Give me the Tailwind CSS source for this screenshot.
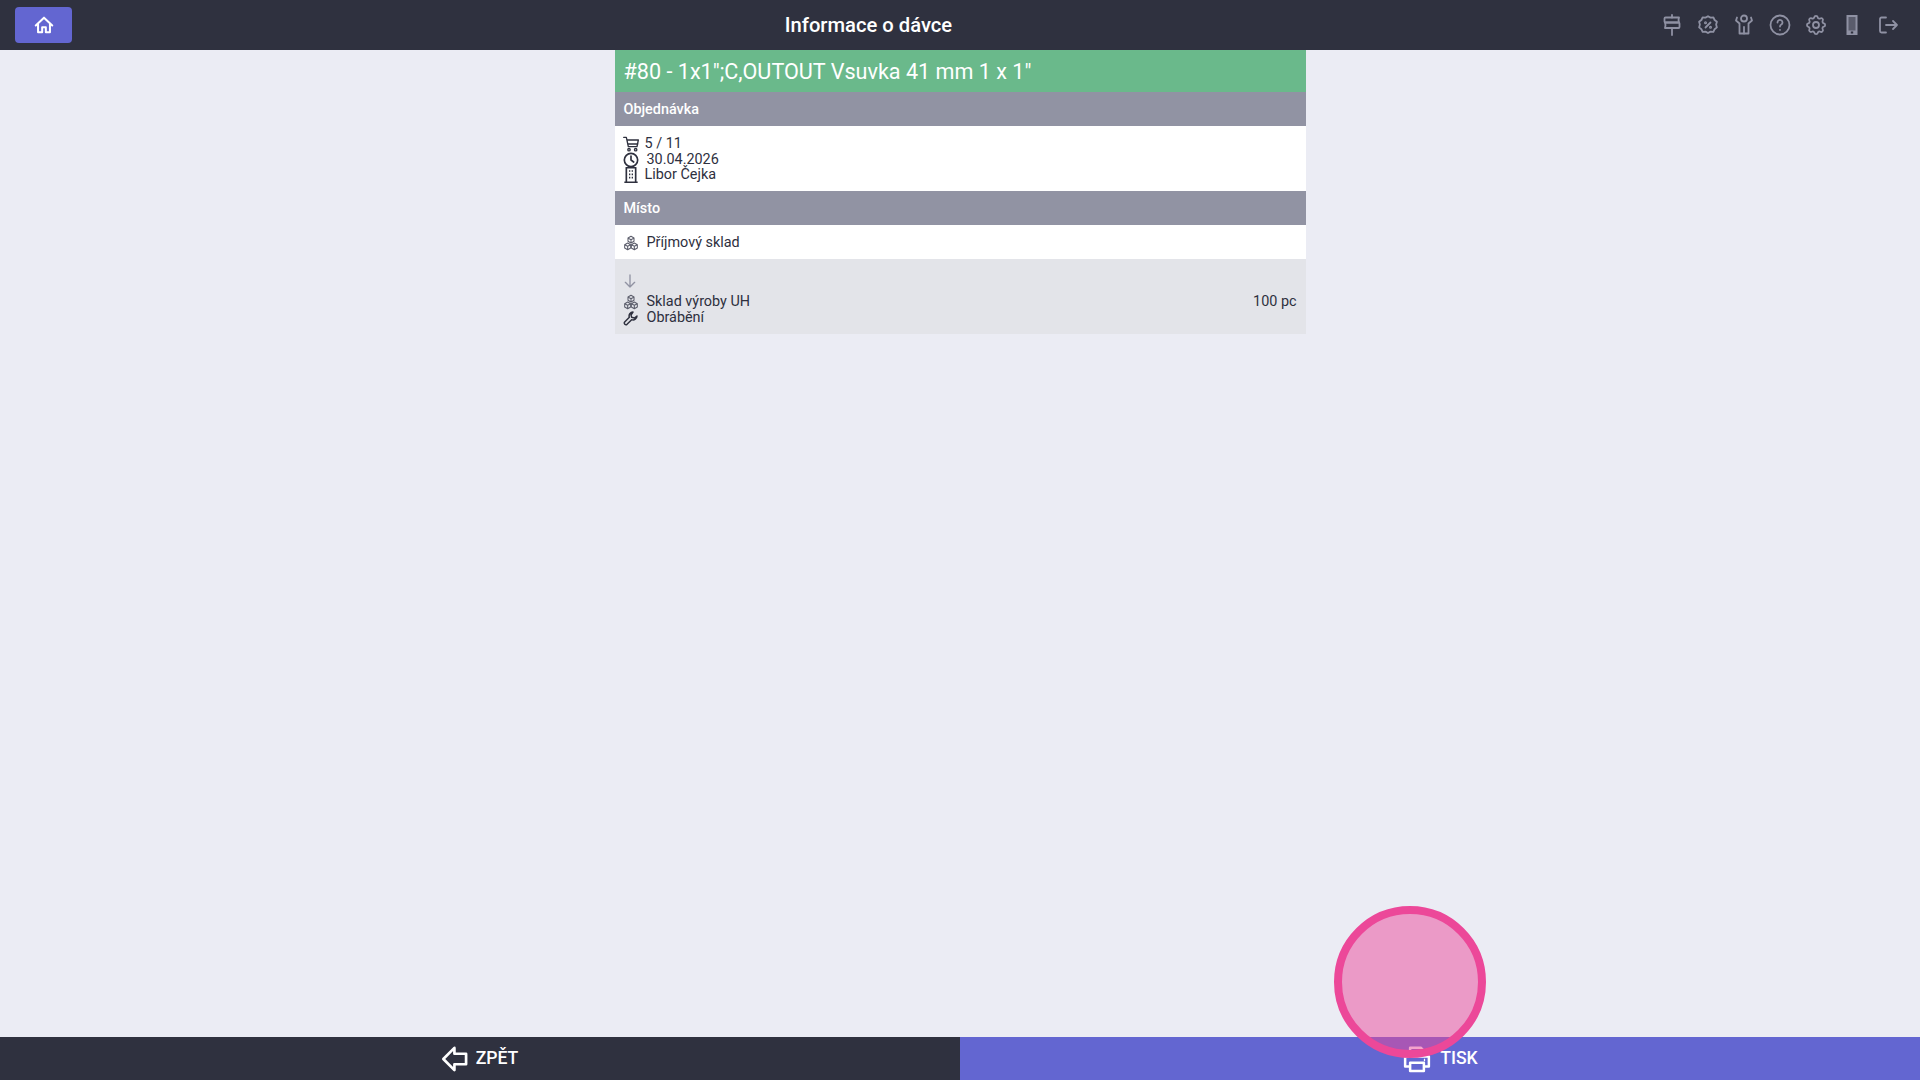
<!DOCTYPE html>
<html lang="cs">
<head>
<meta charset="utf-8">
<title>Informace o dávce</title>
<script src="https://cdn.jsdelivr.net/npm/@tailwindcss/browser@4"></script>
</head>
<body class="font-['Roboto',sans-serif]">
<div class="relative flex flex-col w-[1920px] h-[1080px] overflow-hidden bg-[#ebecf4] text-[#2e303e]">
  <header class="grid grid-cols-[1fr_auto_1fr] items-center h-[50px] shrink-0 bg-[#2f313f] pl-[15px] pr-[20px]">
    <div class="flex">
      <button class="flex items-center justify-center w-[57px] h-[36px] rounded-[4px] bg-[#6366d1] text-white">
        <svg class="w-[22px] h-[22px]" viewBox="0 0 24 24" fill="none" stroke="currentColor" stroke-width="2.2" stroke-linecap="round" stroke-linejoin="round"><path d="M3 12.500 12 4l9 8.500"/><path d="M5.500 11v9h4.500v-5.500h4V20h4.500v-9"/></svg>
      </button>
    </div>
    <h1 class="text-[20.2px] leading-[24px] font-medium text-white pr-[178px]">Informace o dávce</h1>
    <div class="flex justify-end items-center gap-[12px] text-[#8f91a3]">
      <svg class="w-[24px] h-[24px]" viewBox="0 0 24 24" fill="none" stroke="currentColor" stroke-width="1.800" stroke-linecap="round" stroke-linejoin="round"><path d="M12 2v2.500M12 15v7"/><path d="M5.500 4.500h13.500l-.5 2.500.5 2.500H5.500a1 1 0 0 1-1-1v-3a1 1 0 0 1 1-1z"/><path d="M5 9.500h13.500a1 1 0 0 1 1 1v3.500a1 1 0 0 1-1 1H5l.5-2.800z"/></svg>
      <svg class="w-[24px] h-[24px]" viewBox="0 0 24 24" fill="none" stroke="currentColor" stroke-width="1.800" stroke-linecap="round" stroke-linejoin="round"><path d="M12 3.200l2.500 1.400 2.900-.2 1.200 2.600 2.300 1.800-.8 2.800.8 2.800-2.300 1.800-1.200 2.600-2.900-.2-2.500 1.400-2.500-1.400-2.900.2-1.200-2.600-2.300-1.800.8-2.800-.8-2.800 2.300-1.800 1.200-2.600 2.900.2z"/><path d="M9.500 14.500l5-5"/><circle cx="9.500" cy="9.800" r=".6"/><circle cx="14.500" cy="14.200" r=".6"/></svg>
      <svg class="w-[24px] h-[24px]" viewBox="0 0 24 24" fill="none" stroke="currentColor" stroke-width="1.800" stroke-linecap="round" stroke-linejoin="round"><circle cx="12" cy="5.500" r="3"/><path d="M5 4.500 4 7.500l3.500 3v10h9v-10l3.500-3-1-3"/><path d="M12 14v6.500"/></svg>
      <svg class="w-[24px] h-[24px]" viewBox="0 0 24 24" fill="none" stroke="currentColor" stroke-width="1.800" stroke-linecap="round" stroke-linejoin="round"><circle cx="12" cy="12" r="9.500"/><path d="M9.500 9.500a2.500 2.500 0 1 1 3.800 2.100c-.8.500-1.300 1-1.300 2"/><path d="M12 16.800v.1"/></svg>
      <svg class="w-[24px] h-[24px]" viewBox="0 0 24 24" fill="none" stroke="currentColor" stroke-width="1.800" stroke-linecap="round" stroke-linejoin="round"><path d="M10.300 4.300c.4-1.800 3-1.800 3.400 0a1.700 1.700 0 0 0 2.600 1.100c1.500-.9 3.300.8 2.400 2.400a1.700 1.700 0 0 0 1.100 2.500c1.800.4 1.800 3 0 3.400a1.700 1.700 0 0 0-1.100 2.600c.9 1.500-.8 3.300-2.400 2.400a1.700 1.700 0 0 0-2.500 1.100c-.4 1.800-3 1.800-3.400 0a1.700 1.700 0 0 0-2.600-1.100c-1.500.9-3.300-.8-2.400-2.400a1.700 1.700 0 0 0-1.100-2.500c-1.800-.4-1.800-3 0-3.400a1.700 1.700 0 0 0 1.100-2.600c-.9-1.500.8-3.300 2.400-2.400a1.700 1.700 0 0 0 2.500-1.100z"/><circle cx="12" cy="12" r="3"/></svg>
      <svg class="w-[24px] h-[24px]" viewBox="0 0 24 24"><rect x="6.500" y="2" width="11" height="20" fill="currentColor"/><rect x="8.500" y="4" width="7" height="13.500" fill="#2f313f" fill-opacity=".55"/><rect x="10.800" y="18.500" width="2.400" height="2" fill="#2f313f"/></svg>
      <svg class="w-[24px] h-[24px]" viewBox="0 0 24 24" fill="none" stroke="currentColor" stroke-width="1.800" stroke-linecap="round" stroke-linejoin="round"><path d="M10 4.500H5.500a1.500 1.500 0 0 0-1.500 1.500v12a1.500 1.500 0 0 0 1.500 1.500H10"/><path d="M10 12h11M17 8l4 4-4 4"/></svg>
    </div>
  </header>

  <main class="flex-1 flex justify-center">
    <div class="w-[691px]">
      <div class="h-[42px] px-[9px] pt-[1px] flex items-center bg-[#6ab98b] text-white text-[21.6px] leading-[26px]">#80 - 1x1";C,OUTOUT Vsuvka 41 mm 1 x 1"</div>
      <div class="h-[34px] px-[9px] pt-[1px] flex items-center bg-[#9193a3] text-white text-[14.4px] font-medium">Objednávka</div>
      <div class="h-[65px] px-[9px] pt-[10px] bg-white text-[14.4px] leading-[15.500px]">
        <div class="flex items-center gap-[6px]">
          <svg class="w-[16px] h-[16px] -ml-[1px]" viewBox="0 0 24 24" fill="none" stroke="currentColor" stroke-width="2" stroke-linecap="round" stroke-linejoin="round"><path d="M1 2h4l3 14h13l2-10H6"/><path d="M8 12h14"/><circle cx="9" cy="20.500" r="1.800"/><circle cx="19" cy="20.500" r="1.800"/></svg>
          <span>5 / 11</span>
        </div>
        <div class="flex items-center gap-[8px]">
          <svg class="w-[16px] h-[16px] -ml-[1px]" viewBox="0 0 24 24" fill="none" stroke="currentColor" stroke-width="2.500" stroke-linecap="round" stroke-linejoin="round"><circle cx="12" cy="12" r="10"/><path d="M12 6v6l4 3"/></svg>
          <span>30.04.2026</span>
        </div>
        <div class="flex items-center gap-[6px] -mt-[1px]">
          <svg class="w-[16px] h-[16px] -ml-[1px]" viewBox="0 0 24 24" fill="none" stroke="currentColor" stroke-width="2.500" stroke-linejoin="round"><path d="M5 23V1h14v22M2 23h20M9 6h2M13 6h2M9 11h2M13 11h2M9 16h2M13 16h2"/></svg>
          <span>Libor Čejka</span>
        </div>
      </div>
      <div class="h-[34px] px-[9px] pt-[1px] flex items-center bg-[#9193a3] text-white text-[14.4px] font-medium">Místo</div>
      <div class="h-[34px] px-[9px] pt-[1px] flex items-center gap-[8px] bg-white text-[14.4px]">
        <svg class="w-[16px] h-[16px] -ml-[1px] text-[#5c5e6c]" viewBox="0 0 24 24" fill="none" stroke="currentColor" stroke-width="1.600" stroke-linejoin="round"><path d="M12 2l4.500 2.500v5L12 12 7.500 9.500v-5zM7 12l4.500 2.500v5L7 22l-4.500-2.500v-5zM17 12l4.500 2.500v5L17 22l-4.500-2.500v-5zM7.500 4.500 12 7l4.500-2.500M12 7v5M2.500 14.500 7 17l4.500-2.500M7 17v5M12.500 14.500 17 17l4.500-2.500M17 17v5"/></svg>
        <span>Příjmový sklad</span>
      </div>
      <div class="h-[75px] px-[9px] pt-[14px] bg-[#e3e4e9] text-[14.4px] leading-[16px]">
        <svg class="w-[16px] h-[16px] -ml-[2px] text-[#9193a3]" viewBox="0 0 24 24" fill="none" stroke="currentColor" stroke-width="2" stroke-linecap="round" stroke-linejoin="round"><path d="M12 3v18M5 14l7 7 7-7"/></svg>
        <div class="flex items-center gap-[8px] mt-[5px]">
          <svg class="w-[16px] h-[16px] -ml-[1px] text-[#5c5e6c]" viewBox="0 0 24 24" fill="none" stroke="currentColor" stroke-width="1.600" stroke-linejoin="round"><path d="M12 2l4.500 2.500v5L12 12 7.500 9.500v-5zM7 12l4.500 2.500v5L7 22l-4.500-2.500v-5zM17 12l4.500 2.500v5L17 22l-4.500-2.500v-5zM7.500 4.500 12 7l4.500-2.500M12 7v5M2.500 14.500 7 17l4.500-2.500M7 17v5M12.500 14.500 17 17l4.500-2.500M17 17v5"/></svg>
          <span>Sklad výroby UH</span>
          <span class="ml-auto">100 pc</span>
        </div>
        <div class="flex items-center gap-[8px]">
          <svg class="w-[16px] h-[16px] -ml-[1px]" viewBox="0 0 24 24" fill="none" stroke="currentColor" stroke-width="2.200" stroke-linecap="round" stroke-linejoin="round"><path d="M15 3a6 6 0 0 0-5.500 8L2.500 18a2.500 2.500 0 0 0 3.500 3.500l7-7A6 6 0 0 0 21 9l-4 3-4-1-1-3.500L15 3z"/></svg>
          <span>Obrábění</span>
        </div>
      </div>
    </div>
  </main>

  <footer class="grid grid-cols-2 h-[43px] shrink-0 text-white text-[17.6px] font-medium">
    <button class="flex items-center justify-center gap-[7px] pr-[1px] bg-[#2f313f]">
      <svg class="w-[28px] h-[28px]" viewBox="0 0 24 24" fill="none" stroke="currentColor" stroke-width="2.300" stroke-linejoin="round"><path d="M11.500 2.500 2 12l9.500 9.500V16.500H21.500V7.500H11.500z"/></svg>
      <span>ZPĚT</span>
    </button>
    <button class="flex items-center justify-center gap-[8px] bg-[#6366d1]">
      <svg class="w-[30px] h-[30px]" viewBox="0 0 24 24" fill="none" stroke="currentColor" stroke-width="2" stroke-linejoin="round"><path d="M6.500 10V3h8.500l2.500 2.500V10"/><path d="M6.500 18H2.500V10h19v8h-4"/><path d="M6.500 15h11v6.500h-11z"/><path d="M17.500 12.800h1"/></svg>
      <span>TISK</span>
    </button>
  </footer>

  <div class="absolute left-[1334px] top-[906px] w-[152px] h-[152px] rounded-full border-[8px] border-[#ec4899] bg-[#ec4899]/50"></div>
</div>
</body>
</html>
